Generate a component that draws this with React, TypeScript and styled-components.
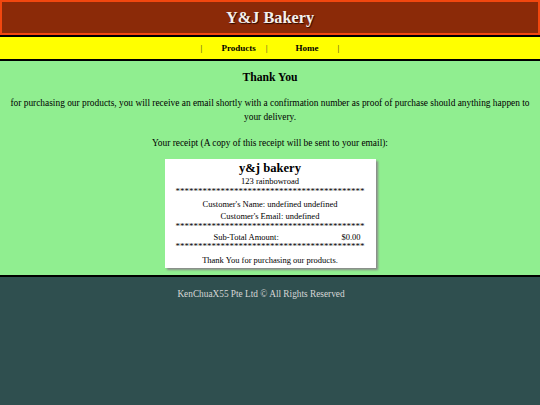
import { createGlobalStyle, styled } from 'styled-components';

const GlobalStyle = createGlobalStyle`
  html, body {
    margin: 0;
    padding: 0;
    height: 100%;
  }
  body {
    font-family: 'Liberation Serif', 'Times New Roman', serif;
    color: #000;
  }
  #root {
    min-height: 100%;
    display: flex;
    flex-direction: column;
  }
`;

const Page = styled.div`
  display: flex;
  flex-direction: column;
  flex: 1;
  min-height: 405px;
`;

const Header = styled.header`
  box-sizing: border-box;
  height: 35px;
  background-color: #8b2a08;
  border: 2px solid #f2470f;
  display: flex;
  align-items: center;
  justify-content: center;
`;

const Title = styled.h1`
  margin: 0;
  font-size: 16.3px;
  font-weight: bold;
  color: #f4f0ec;
  text-shadow: 1px 1px 1px #2a0a00;
`;

const Nav = styled.nav`
  height: 22px;
  background-color: #ffff00;
  border-top: 2px solid #000;
  border-bottom: 2px solid #000;
  display: flex;
  align-items: center;
  justify-content: center;
  font-size: 9px;
`;

const Sep = styled.span`
  font-weight: normal;
  color: #333;
`;

const NavLink = styled.a<{ $left: number; $right: number }>`
  margin: 0 ${(p) => p.$right}px 0 ${(p) => p.$left}px;
  font-weight: bold;
  color: #000;
  text-decoration: none;
  cursor: pointer;
`;

const Main = styled.main`
  background-color: #90ee90;
  border-bottom: 2px solid #000;
  height: 214px;
  display: flex;
  flex-direction: column;
  align-items: center;
  text-align: center;
`;

const Heading = styled.h3`
  margin: 10px 0 0;
  font-size: 11.7px;
  line-height: 14px;
`;

const Text = styled.p<{ $top: number }>`
  margin: ${(p) => p.$top}px 8px 0;
  font-size: 9.4px;
  line-height: 14px;
`;

const Receipt = styled.div`
  margin-top: 9px;
  box-sizing: border-box;
  width: 211px;
  height: 109px;
  background: #fff;
  box-shadow: 2px 2px 2px #8a8a8a;
  padding-top: 2px;
  display: flex;
  flex-direction: column;
  align-items: center;
  font-size: 8.5px;
`;

const ShopName = styled.div`
  font-size: 12.6px;
  font-weight: bold;
  line-height: 14px;
`;

const Line = styled.div<{ $h: number; $mt?: number }>`
  height: ${(p) => p.$h}px;
  line-height: ${(p) => p.$h}px;
  margin-top: ${(p) => p.$mt ?? 0}px;
  white-space: nowrap;
`;

const Stars = styled(Line)`
  width: 192px;
  overflow: hidden;
  text-align: center;
  font-size: 9px;
`;

const TotalRow = styled(Line)`
  width: 147px;
  margin-left: 34px;
  display: flex;
  justify-content: space-between;
`;

const Footer = styled.footer`
  flex: 1;
  background-color: #2f4f4f;
  color: #d6d6d6;
  text-align: center;
  font-size: 9.3px;
  padding: 11px 18px 0 0;
  line-height: 12px;
`;

const stars = '*'.repeat(42);

const App = () => {
  return (
    <Page>
      <GlobalStyle />
      <Header>
        <Title>Y&amp;J Bakery</Title>
      </Header>
      <Nav>
        <Sep>|</Sep>
        <NavLink $left={19} $right={10}>Products</NavLink>
        <Sep>|</Sep>
        <NavLink $left={28} $right={19}>Home</NavLink>
        <Sep>|</Sep>
      </Nav>
      <Main>
        <Heading>Thank You</Heading>
        <Text $top={11}>
          for purchasing our products, you will receive an email shortly with a confirmation
          number as proof of purchase should anything happen to your delivery.
        </Text>
        <Text $top={12}>Your receipt (A copy of this receipt will be sent to your email):</Text>
        <Receipt>
          <ShopName>y&amp;j bakery</ShopName>
          <Line $h={12}>123 rainbowroad</Line>
          <Stars $h={8}>{stars}</Stars>
          <Line $h={12} $mt={3}>Customer's Name: undefined undefined</Line>
          <Line $h={12}>Customer's Email: undefined</Line>
          <Stars $h={9}>{stars}</Stars>
          <TotalRow $h={10} $mt={1}>
            <span>Sub-Total Amount:</span>
            <span>$0.00</span>
          </TotalRow>
          <Stars $h={8}>{stars}</Stars>
          <Line $h={12} $mt={4}>Thank You for purchasing our products.</Line>
        </Receipt>
      </Main>
      <Footer>KenChuaX55 Pte Ltd © All Rights Reserved</Footer>
    </Page>
  );
};

export default App;
